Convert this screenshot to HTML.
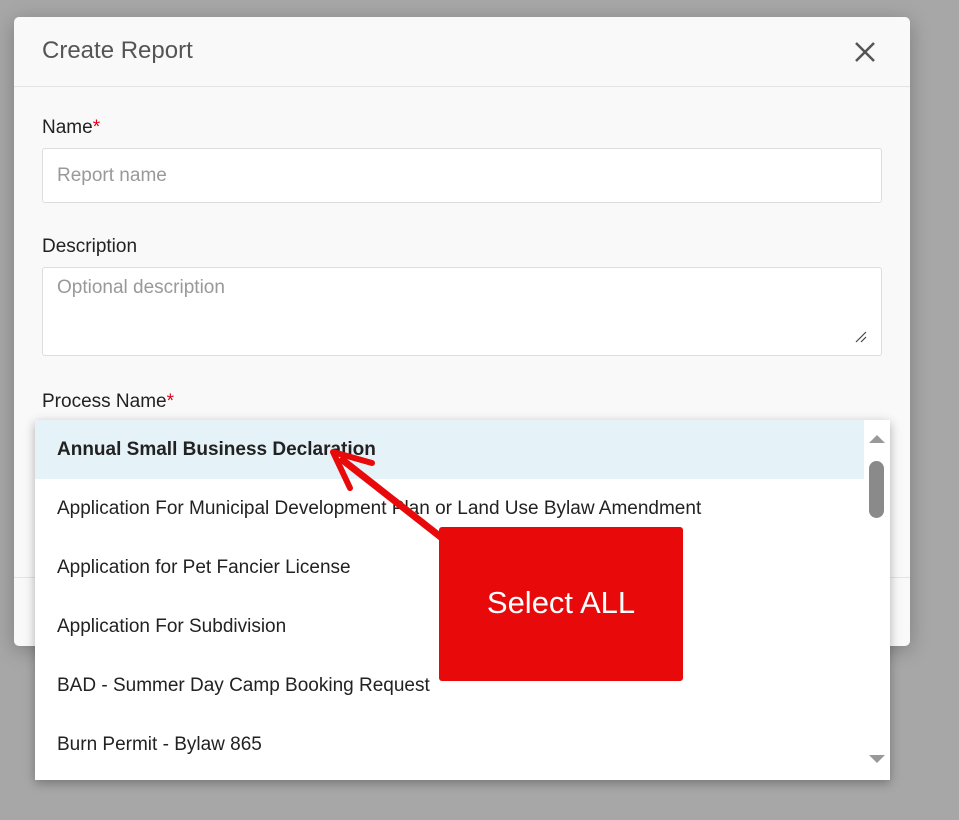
<!DOCTYPE html>
<html><head><style>
body{margin:0;width:959px;height:820px;background:#a7a7a7;position:relative;overflow:hidden;font-family:"Liberation Sans",sans-serif}
.modal{position:absolute;left:14px;top:17px;width:896px;height:629px;background:#f9f9f9;border-radius:5px;box-shadow:0 4px 20px rgba(0,0,0,.25)}
.hdr{height:69px;border-bottom:1px solid #e3e3e3;position:relative}
.title{position:absolute;left:28px;top:20px;font-size:24px;color:#555}
.x{position:absolute;left:840px;top:24px}
.lbl{position:absolute;left:28px;font-size:19px;color:#222}
.lbl b{color:#e0001b;font-weight:normal}
.inp{position:absolute;left:28px;width:838px;background:#fff;border:1px solid #ddd;border-radius:3px;font-size:19px;color:#999}
.dd{position:absolute;left:35px;top:420px;width:855px;height:360px;background:#fff;box-shadow:0 3px 10px rgba(0,0,0,.3);overflow:hidden}
.it{height:59px;line-height:59px;padding-left:22px;font-size:19px;color:#222;width:807px}
.sel{background:#e5f2f8;font-weight:bold}
.box{position:absolute;left:439px;top:527px;width:244px;height:154px;background:#e80a0a;border-radius:3px;color:#fff;font-size:31px;text-align:center;line-height:152px}
</style></head><body>
<div class="modal">
<div class="hdr"><div class="title">Create Report</div>
<svg class="x" width="22" height="22" viewBox="0 0 22 22"><path d="M2 2L20 20M20 2L2 20" stroke="#555" stroke-width="2.5"/></svg></div>
<div class="lbl" style="top:100px">Name<b>*</b></div>
<div class="inp" style="top:131px;height:53px;line-height:53px;padding-left:14px;width:824px">Report name</div>
<div class="lbl" style="top:219px">Description</div>
<div class="inp" style="top:250px;height:89px;padding:9px 0 0 14px;box-sizing:border-box;width:840px">Optional description
<svg style="position:absolute;right:14px;bottom:12px" width="12" height="12"><path d="M1 11L11 1M6 11L11 6" stroke="#444" stroke-width="1.2"/></svg></div>
<div class="lbl" style="top:374px">Process Name<b>*</b></div>
<div style="position:absolute;left:0;top:560px;width:896px;border-top:1px solid #e3e3e3"></div>
</div>
<div class="dd">
<div class="it sel">Annual Small Business Declaration</div>
<div class="it">Application For Municipal Development Plan or Land Use Bylaw Amendment</div>
<div class="it">Application for Pet Fancier License</div>
<div class="it">Application For Subdivision</div>
<div class="it">BAD - Summer Day Camp Booking Request</div>
<div class="it">Burn Permit - Bylaw 865</div>
<svg style="position:absolute;left:832px;top:14px" width="20" height="10"><path d="M2 9L10 1L18 9Z" fill="#999"/></svg>
<div style="position:absolute;left:834px;top:41px;width:15px;height:57px;background:#8a8a8a;border-radius:8px"></div>
<svg style="position:absolute;left:832px;top:334px" width="20" height="10"><path d="M2 1L10 9L18 1Z" fill="#999"/></svg>
</div>
<svg style="position:absolute;left:0;top:0" width="959" height="820"><path d="M442 538L340 458" stroke="#e80a0a" stroke-width="7"/><path d="M333 452L372 463M333 452L350 488" stroke="#e80a0a" stroke-width="6" stroke-linecap="round"/></svg>
<div class="box">Select ALL</div>
</body></html>
